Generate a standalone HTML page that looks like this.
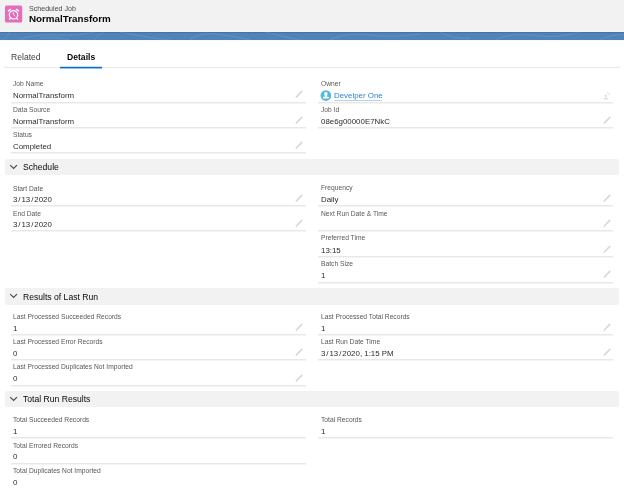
<!DOCTYPE html>
<html><head><meta charset="utf-8"><style>
html,body{margin:0;padding:0;background:#fff;}
body{width:624px;height:488px;position:relative;overflow:hidden;font-family:"Liberation Sans", sans-serif;}
.t{position:absolute;white-space:nowrap;will-change:transform;}
.r{position:absolute;}
</style></head><body>
<div class="r" style="left:0px;top:0px;width:624px;height:31px;background:#f2f2f2;"></div>
<div class="r" style="left:0px;top:31px;width:624px;height:1px;background:#f7f5f2;"></div>
<div class="r" style="left:0px;top:32px;width:624px;height:8px;background:#5084b8;"></div>
<div class="r" style="left:0px;top:32px;width:624px;height:1px;background:#4574aa;"></div>
<div class="r" style="left:0px;top:40px;width:624px;height:1px;background:#fbfaf8;"></div>
<svg class="r" style="left:0;top:32px" width="624" height="8" viewBox="0 0 624 8"><g stroke="rgba(255,255,255,0.15)" stroke-width="0.7" fill="none"><path d="M2 8 Q8 4 10 0"/><path d="M20 8 Q30 2 60 3 Q80 4 95 0"/><path d="M40 6 Q60 5 70 8"/><path d="M94 8 Q98 2 104 0"/><path d="M120 0 Q150 6 170 8"/><path d="M190 8 Q200 0 215 2 Q235 4 250 8"/><path d="M265 0 Q290 6 300 8"/><path d="M330 8 Q345 0 370 3 Q395 6 420 2"/><path d="M440 0 Q455 8 470 6"/><path d="M495 8 Q510 0 540 4 Q560 6 580 0"/><path d="M600 8 Q610 2 624 3"/></g></svg>
<svg class="r" style="left:5px;top:5px" width="18" height="18" viewBox="0 0 18 18"><rect x="0" y="0.4" width="17.2" height="17.2" rx="1.6" fill="#e46dbc"/><circle cx="8.5" cy="9.8" r="4.2" stroke="#fff" stroke-width="1.2" fill="none"/><path d="M3.4 5.9 L5.5 4.4 M11.5 4.4 L13.6 5.9" stroke="#fff" stroke-width="1.4" stroke-linecap="round" fill="none"/><path d="M5.3 13.2 L4.4 14.4 M11.7 13.2 L12.6 14.4" stroke="#fff" stroke-width="1.1" stroke-linecap="round"/><path d="M8.3 7.6 L8.7 9.8 L9.8 10.9" stroke="#fff" stroke-width="0.9" fill="none" stroke-linecap="round"/></svg>
<div class="t" style="left:28.6px;top:4.80px;font-size:7.1px;line-height:8.52px;color:#4a4846;font-weight:400;">Scheduled Job</div>
<div class="t" style="left:28.6px;top:12.60px;font-size:9.8px;line-height:11.76px;color:#080707;font-weight:700;">NormalTransform</div>
<div class="t" style="left:11px;top:52.00px;font-size:8.6px;line-height:10.32px;color:#3e3e3c;font-weight:400;">Related</div>
<div class="t" style="left:67px;top:52.00px;font-size:8.6px;line-height:10.32px;color:#080707;font-weight:700;">Details</div>
<div class="r" style="left:4px;top:67px;width:616px;height:1px;background:#e9e8e7;"></div>
<div class="r" style="left:60px;top:66px;width:42px;height:1px;background:#c6e0f5;"></div>
<div class="r" style="left:60px;top:67px;width:42px;height:1px;background:#0070d2;"></div>
<div class="r" style="left:60px;top:68px;width:42px;height:1px;background:#8ebfeb;"></div>
<div class="r" style="left:11px;top:102px;width:294.5px;height:1px;background:#e9e8e7;"></div>
<div class="r" style="left:11px;top:103px;width:294.5px;height:1px;background:#f5f4f3;"></div>
<div class="t" style="left:13px;top:79.80px;font-size:6.7px;line-height:8.04px;color:#5a5856;font-weight:400;">Job Name</div>
<div class="t" style="left:13px;top:90.70px;font-size:7.9px;line-height:9.48px;color:#2e2c2b;font-weight:400;">NormalTransform</div>
<svg class="r" style="left:294.00px;top:88.85px" width="10" height="10" viewBox="0 0 10 10"><path d="M2.3 8 L7.8 2.4" stroke="#d9d8d7" stroke-width="1.7" stroke-linecap="round"/></svg>
<div class="r" style="left:11px;top:127px;width:294.5px;height:1px;background:#e9e8e7;"></div>
<div class="r" style="left:11px;top:128px;width:294.5px;height:1px;background:#f5f4f3;"></div>
<div class="t" style="left:13px;top:105.90px;font-size:6.7px;line-height:8.04px;color:#5a5856;font-weight:400;">Data Source</div>
<div class="t" style="left:13px;top:116.90px;font-size:7.9px;line-height:9.48px;color:#2e2c2b;font-weight:400;">NormalTransform</div>
<svg class="r" style="left:294.00px;top:115.05px" width="10" height="10" viewBox="0 0 10 10"><path d="M2.3 8 L7.8 2.4" stroke="#d9d8d7" stroke-width="1.7" stroke-linecap="round"/></svg>
<div class="r" style="left:11px;top:152px;width:294.5px;height:1px;background:#e9e8e7;"></div>
<div class="r" style="left:11px;top:153px;width:294.5px;height:1px;background:#f5f4f3;"></div>
<div class="t" style="left:13px;top:130.90px;font-size:6.7px;line-height:8.04px;color:#5a5856;font-weight:400;">Status</div>
<div class="t" style="left:13px;top:141.75px;font-size:7.9px;line-height:9.48px;color:#2e2c2b;font-weight:400;">Completed</div>
<svg class="r" style="left:294.00px;top:139.90px" width="10" height="10" viewBox="0 0 10 10"><path d="M2.3 8 L7.8 2.4" stroke="#d9d8d7" stroke-width="1.7" stroke-linecap="round"/></svg>
<div class="r" style="left:318px;top:102px;width:295px;height:1px;background:#e9e8e7;"></div>
<div class="r" style="left:318px;top:103px;width:295px;height:1px;background:#f5f4f3;"></div>
<div class="t" style="left:321px;top:80.00px;font-size:6.7px;line-height:8.04px;color:#5a5856;font-weight:400;">Owner</div>
<svg class="r" style="left:320px;top:90px" width="12" height="12" viewBox="0 0 12 12"><circle cx="5.9" cy="5.6" r="5.3" fill="#55b8dc"/><ellipse cx="5.9" cy="4.1" rx="1.75" ry="2.05" fill="#fff"/><rect x="5" y="5.5" width="1.8" height="1.6" fill="#fff"/><rect x="3" y="6.8" width="5.8" height="1.7" rx="0.5" fill="#fff"/></svg>
<div class="t" style="left:333.5px;top:90.75px;font-size:7.9px;line-height:9.48px;color:#2f84d4;font-weight:400;">Develper One</div>
<div class="r" style="left:333.5px;top:100.25px;width:48px;height:1px;background:#b3d3f1;"></div>
<svg class="r" style="left:603px;top:91px" width="9" height="10" viewBox="0 0 9 10"><circle cx="2.9" cy="4.6" r="1.2" fill="#e2e1e0"/><rect x="2.3" y="4.8" width="1.2" height="2.4" fill="#e2e1e0"/><rect x="0.7" y="6.9" width="4.6" height="1.6" rx="0.5" fill="#e2e1e0"/><path d="M4.2 1.9 Q6.2 2.2 6.7 4.4" stroke="#e2e1e0" stroke-width="1" fill="none"/></svg>
<div class="r" style="left:318px;top:127px;width:295px;height:1px;background:#e9e8e7;"></div>
<div class="r" style="left:318px;top:128px;width:295px;height:1px;background:#f5f4f3;"></div>
<div class="t" style="left:321px;top:105.90px;font-size:6.7px;line-height:8.04px;color:#5a5856;font-weight:400;">Job Id</div>
<div class="t" style="left:321px;top:116.80px;font-size:7.9px;line-height:9.48px;color:#2e2c2b;font-weight:400;">08e6g00000E7NkC</div>
<svg class="r" style="left:601.60px;top:114.95px" width="10" height="10" viewBox="0 0 10 10"><path d="M2.3 8 L7.8 2.4" stroke="#d9d8d7" stroke-width="1.7" stroke-linecap="round"/></svg>
<div class="r" style="left:5px;top:159.4px;width:614px;height:16.0px;background:#f2f2f2;border-radius:2px;"></div>
<svg class="r" style="left:9px;top:164.4px" width="10" height="7" viewBox="0 0 10 7"><path d="M1.2 1.1 L4.6 4.4 L8 1.1" stroke="#4a4a4a" stroke-width="1.2" fill="none"/></svg>
<div class="t" style="left:22.5px;top:162.10px;font-size:8.6px;line-height:10.32px;color:#080707;font-weight:400;">Schedule</div>
<div class="r" style="left:11px;top:205px;width:294.5px;height:1px;background:#e9e8e7;"></div>
<div class="r" style="left:11px;top:206px;width:294.5px;height:1px;background:#f5f4f3;"></div>
<div class="t" style="left:13px;top:184.50px;font-size:6.7px;line-height:8.04px;color:#5a5856;font-weight:400;">Start Date</div>
<div class="t" style="left:13px;top:194.60px;font-size:7.9px;line-height:9.48px;color:#2e2c2b;font-weight:400;">3<span style="margin:0 0.95px">/</span>13<span style="margin:0 0.95px">/</span>2020</div>
<svg class="r" style="left:294.00px;top:192.75px" width="10" height="10" viewBox="0 0 10 10"><path d="M2.3 8 L7.8 2.4" stroke="#d9d8d7" stroke-width="1.7" stroke-linecap="round"/></svg>
<div class="r" style="left:11px;top:230px;width:294.5px;height:1px;background:#e9e8e7;"></div>
<div class="r" style="left:11px;top:231px;width:294.5px;height:1px;background:#f5f4f3;"></div>
<div class="t" style="left:13px;top:209.70px;font-size:6.7px;line-height:8.04px;color:#5a5856;font-weight:400;">End Date</div>
<div class="t" style="left:13px;top:219.60px;font-size:7.9px;line-height:9.48px;color:#2e2c2b;font-weight:400;">3<span style="margin:0 0.95px">/</span>13<span style="margin:0 0.95px">/</span>2020</div>
<svg class="r" style="left:294.00px;top:217.75px" width="10" height="10" viewBox="0 0 10 10"><path d="M2.3 8 L7.8 2.4" stroke="#d9d8d7" stroke-width="1.7" stroke-linecap="round"/></svg>
<div class="r" style="left:318px;top:205px;width:295px;height:1px;background:#e9e8e7;"></div>
<div class="r" style="left:318px;top:206px;width:295px;height:1px;background:#f5f4f3;"></div>
<div class="t" style="left:321px;top:184.40px;font-size:6.7px;line-height:8.04px;color:#5a5856;font-weight:400;">Frequency</div>
<div class="t" style="left:321px;top:194.60px;font-size:7.9px;line-height:9.48px;color:#2e2c2b;font-weight:400;">Daily</div>
<svg class="r" style="left:601.60px;top:192.75px" width="10" height="10" viewBox="0 0 10 10"><path d="M2.3 8 L7.8 2.4" stroke="#d9d8d7" stroke-width="1.7" stroke-linecap="round"/></svg>
<div class="r" style="left:318px;top:230px;width:295px;height:1px;background:#e9e8e7;"></div>
<div class="r" style="left:318px;top:231px;width:295px;height:1px;background:#f5f4f3;"></div>
<div class="t" style="left:321px;top:209.70px;font-size:6.7px;line-height:8.04px;color:#5a5856;font-weight:400;">Next Run Date &amp; Time</div>
<svg class="r" style="left:601.60px;top:217.75px" width="10" height="10" viewBox="0 0 10 10"><path d="M2.3 8 L7.8 2.4" stroke="#d9d8d7" stroke-width="1.7" stroke-linecap="round"/></svg>
<div class="r" style="left:318px;top:256px;width:295px;height:1px;background:#e9e8e7;"></div>
<div class="r" style="left:318px;top:257px;width:295px;height:1px;background:#f5f4f3;"></div>
<div class="t" style="left:321px;top:234.20px;font-size:6.7px;line-height:8.04px;color:#5a5856;font-weight:400;">Preferred Time</div>
<div class="t" style="left:321px;top:245.70px;font-size:7.9px;line-height:9.48px;color:#2e2c2b;font-weight:400;">13:15</div>
<svg class="r" style="left:601.60px;top:243.85px" width="10" height="10" viewBox="0 0 10 10"><path d="M2.3 8 L7.8 2.4" stroke="#d9d8d7" stroke-width="1.7" stroke-linecap="round"/></svg>
<div class="r" style="left:318px;top:282px;width:295px;height:1px;background:#e9e8e7;"></div>
<div class="r" style="left:318px;top:283px;width:295px;height:1px;background:#f5f4f3;"></div>
<div class="t" style="left:321px;top:259.90px;font-size:6.7px;line-height:8.04px;color:#5a5856;font-weight:400;">Batch Size</div>
<div class="t" style="left:321px;top:270.75px;font-size:7.9px;line-height:9.48px;color:#2e2c2b;font-weight:400;">1</div>
<svg class="r" style="left:601.60px;top:268.90px" width="10" height="10" viewBox="0 0 10 10"><path d="M2.3 8 L7.8 2.4" stroke="#d9d8d7" stroke-width="1.7" stroke-linecap="round"/></svg>
<div class="r" style="left:5px;top:288.4px;width:614px;height:16.200000000000045px;background:#f2f2f2;border-radius:2px;"></div>
<svg class="r" style="left:9px;top:293.4px" width="10" height="7" viewBox="0 0 10 7"><path d="M1.2 1.1 L4.6 4.4 L8 1.1" stroke="#4a4a4a" stroke-width="1.2" fill="none"/></svg>
<div class="t" style="left:22.5px;top:291.70px;font-size:8.6px;line-height:10.32px;color:#080707;font-weight:400;">Results of Last Run</div>
<div class="r" style="left:11px;top:334px;width:294.5px;height:1px;background:#e9e8e7;"></div>
<div class="r" style="left:11px;top:335px;width:294.5px;height:1px;background:#f5f4f3;"></div>
<div class="t" style="left:13px;top:313.40px;font-size:6.7px;line-height:8.04px;color:#5a5856;font-weight:400;">Last Processed Succeeded Records</div>
<div class="t" style="left:13px;top:323.70px;font-size:7.9px;line-height:9.48px;color:#2e2c2b;font-weight:400;">1</div>
<svg class="r" style="left:294.00px;top:321.85px" width="10" height="10" viewBox="0 0 10 10"><path d="M2.3 8 L7.8 2.4" stroke="#d9d8d7" stroke-width="1.7" stroke-linecap="round"/></svg>
<div class="r" style="left:11px;top:359px;width:294.5px;height:1px;background:#e9e8e7;"></div>
<div class="r" style="left:11px;top:360px;width:294.5px;height:1px;background:#f5f4f3;"></div>
<div class="t" style="left:13px;top:338.30px;font-size:6.7px;line-height:8.04px;color:#5a5856;font-weight:400;">Last Processed Error Records</div>
<div class="t" style="left:13px;top:349.00px;font-size:7.9px;line-height:9.48px;color:#2e2c2b;font-weight:400;">0</div>
<svg class="r" style="left:294.00px;top:347.15px" width="10" height="10" viewBox="0 0 10 10"><path d="M2.3 8 L7.8 2.4" stroke="#d9d8d7" stroke-width="1.7" stroke-linecap="round"/></svg>
<div class="r" style="left:11px;top:385px;width:294.5px;height:1px;background:#e9e8e7;"></div>
<div class="r" style="left:11px;top:386px;width:294.5px;height:1px;background:#f5f4f3;"></div>
<div class="t" style="left:13px;top:363.25px;font-size:6.7px;line-height:8.04px;color:#5a5856;font-weight:400;">Last Processed Duplicates Not Imported</div>
<div class="t" style="left:13px;top:374.40px;font-size:7.9px;line-height:9.48px;color:#2e2c2b;font-weight:400;">0</div>
<svg class="r" style="left:294.00px;top:372.55px" width="10" height="10" viewBox="0 0 10 10"><path d="M2.3 8 L7.8 2.4" stroke="#d9d8d7" stroke-width="1.7" stroke-linecap="round"/></svg>
<div class="r" style="left:318px;top:334px;width:295px;height:1px;background:#e9e8e7;"></div>
<div class="r" style="left:318px;top:335px;width:295px;height:1px;background:#f5f4f3;"></div>
<div class="t" style="left:321px;top:313.40px;font-size:6.7px;line-height:8.04px;color:#5a5856;font-weight:400;">Last Processed Total Records</div>
<div class="t" style="left:321px;top:323.70px;font-size:7.9px;line-height:9.48px;color:#2e2c2b;font-weight:400;">1</div>
<svg class="r" style="left:601.60px;top:321.85px" width="10" height="10" viewBox="0 0 10 10"><path d="M2.3 8 L7.8 2.4" stroke="#d9d8d7" stroke-width="1.7" stroke-linecap="round"/></svg>
<div class="r" style="left:318px;top:359px;width:295px;height:1px;background:#e9e8e7;"></div>
<div class="r" style="left:318px;top:360px;width:295px;height:1px;background:#f5f4f3;"></div>
<div class="t" style="left:321px;top:338.30px;font-size:6.7px;line-height:8.04px;color:#5a5856;font-weight:400;">Last Run Date Time</div>
<div class="t" style="left:321px;top:349.00px;font-size:7.9px;line-height:9.48px;color:#2e2c2b;font-weight:400;">3<span style="margin:0 0.95px">/</span>13<span style="margin:0 0.95px">/</span>2020, 1:15 PM</div>
<svg class="r" style="left:601.60px;top:347.15px" width="10" height="10" viewBox="0 0 10 10"><path d="M2.3 8 L7.8 2.4" stroke="#d9d8d7" stroke-width="1.7" stroke-linecap="round"/></svg>
<div class="r" style="left:5px;top:391.1px;width:614px;height:16.399999999999977px;background:#f2f2f2;border-radius:2px;"></div>
<svg class="r" style="left:9px;top:396.1px" width="10" height="7" viewBox="0 0 10 7"><path d="M1.2 1.1 L4.6 4.4 L8 1.1" stroke="#4a4a4a" stroke-width="1.2" fill="none"/></svg>
<div class="t" style="left:22.5px;top:394.10px;font-size:8.6px;line-height:10.32px;color:#080707;font-weight:400;">Total Run Results</div>
<div class="r" style="left:11px;top:437px;width:294.5px;height:1px;background:#e9e8e7;"></div>
<div class="r" style="left:11px;top:438px;width:294.5px;height:1px;background:#f5f4f3;"></div>
<div class="t" style="left:13px;top:415.80px;font-size:6.7px;line-height:8.04px;color:#5a5856;font-weight:400;">Total Succeeded Records</div>
<div class="t" style="left:13px;top:426.70px;font-size:7.9px;line-height:9.48px;color:#2e2c2b;font-weight:400;">1</div>
<div class="r" style="left:11px;top:463px;width:294.5px;height:1px;background:#e9e8e7;"></div>
<div class="r" style="left:11px;top:464px;width:294.5px;height:1px;background:#f5f4f3;"></div>
<div class="t" style="left:13px;top:441.50px;font-size:6.7px;line-height:8.04px;color:#5a5856;font-weight:400;">Total Errored Records</div>
<div class="t" style="left:13px;top:452.20px;font-size:7.9px;line-height:9.48px;color:#2e2c2b;font-weight:400;">0</div>
<div class="r" style="left:11px;top:489px;width:294.5px;height:1px;background:#e9e8e7;"></div>
<div class="r" style="left:11px;top:490px;width:294.5px;height:1px;background:#f5f4f3;"></div>
<div class="t" style="left:13px;top:467.00px;font-size:6.7px;line-height:8.04px;color:#5a5856;font-weight:400;">Total Duplicates Not Imported</div>
<div class="t" style="left:13px;top:478.20px;font-size:7.9px;line-height:9.48px;color:#2e2c2b;font-weight:400;">0</div>
<div class="r" style="left:318px;top:437px;width:295px;height:1px;background:#e9e8e7;"></div>
<div class="r" style="left:318px;top:438px;width:295px;height:1px;background:#f5f4f3;"></div>
<div class="t" style="left:321px;top:415.80px;font-size:6.7px;line-height:8.04px;color:#5a5856;font-weight:400;">Total Records</div>
<div class="t" style="left:321px;top:426.70px;font-size:7.9px;line-height:9.48px;color:#2e2c2b;font-weight:400;">1</div>
</body></html>
